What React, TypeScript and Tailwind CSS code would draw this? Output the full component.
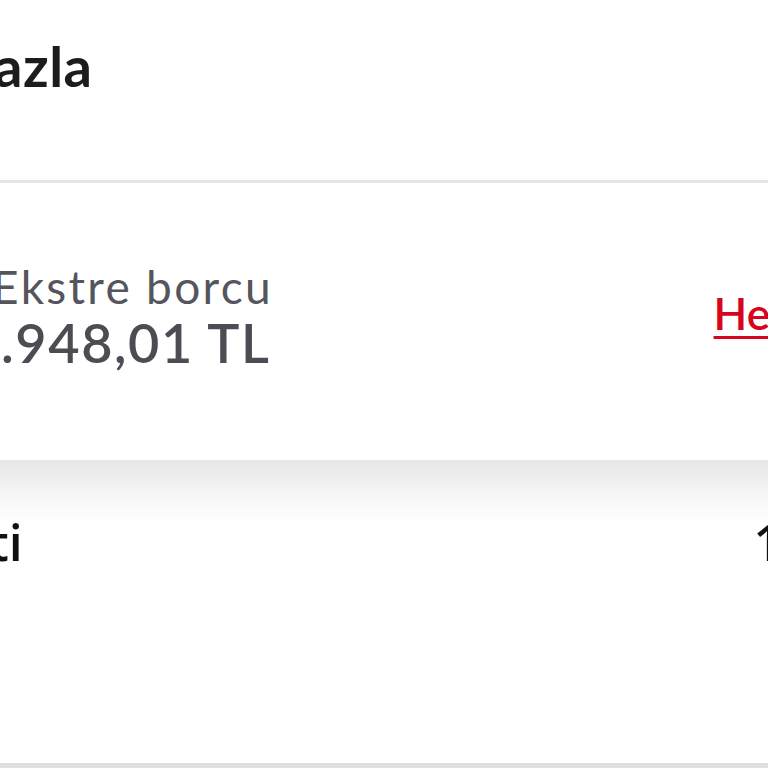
import React from "react";

export default function App() {
  return (
    <div className="w-[768px] h-[768px] overflow-hidden bg-white flex flex-col" style={{ fontFamily: "Lato, 'Noto Sans', sans-serif" }}>
      <div className="h-[180px] shrink-0 flex items-start pt-[30px]">
        <span className="ml-[-6px] text-[56px] leading-[72px] font-bold text-[#1c1c1e] tracking-[0.5px]">azla</span>
      </div>
      <div className="h-[3px] shrink-0 bg-[#e6e6e8]" />
      <div className="h-[277px] shrink-0 flex items-center justify-between pb-[12px]">
        <div className="flex flex-col ml-[-8px]">
          <span className="text-[46px] leading-[54px] text-[#55555d] tracking-[2.3px]">Ekstre borcu</span>
          <span className="ml-[-24px] text-[54px] leading-[58px] font-semibold text-[#4c4c55] tracking-[1.6px]">1.948,01 TL</span>
        </div>
        <span className="mr-[-2px] mt-[-6px] text-[44px] leading-[50px] font-semibold text-[#d8041d] underline decoration-[3px] underline-offset-[6px]">He</span>
      </div>
      <div className="h-[303px] shrink-0 flex flex-col bg-white">
        <div className="h-[64px] shrink-0 bg-gradient-to-b from-[#e6e6e6] via-[#f5f5f5] to-white" />
        <div className="flex items-start justify-between" style={{ fontFamily: "'Open Sans', 'Noto Sans', sans-serif" }}>
          <span className="ml-[-11px] mt-[-12px] text-[50px] leading-[60px] font-semibold text-[#111111]">ti</span>
          <span className="mr-[-14px] mt-[-12px] text-[50px] leading-[60px] font-semibold text-[#111111]">1</span>
        </div>
      </div>
      <div className="h-[5px] shrink-0 bg-[#e0e0e0]" />
    </div>
  );
}
